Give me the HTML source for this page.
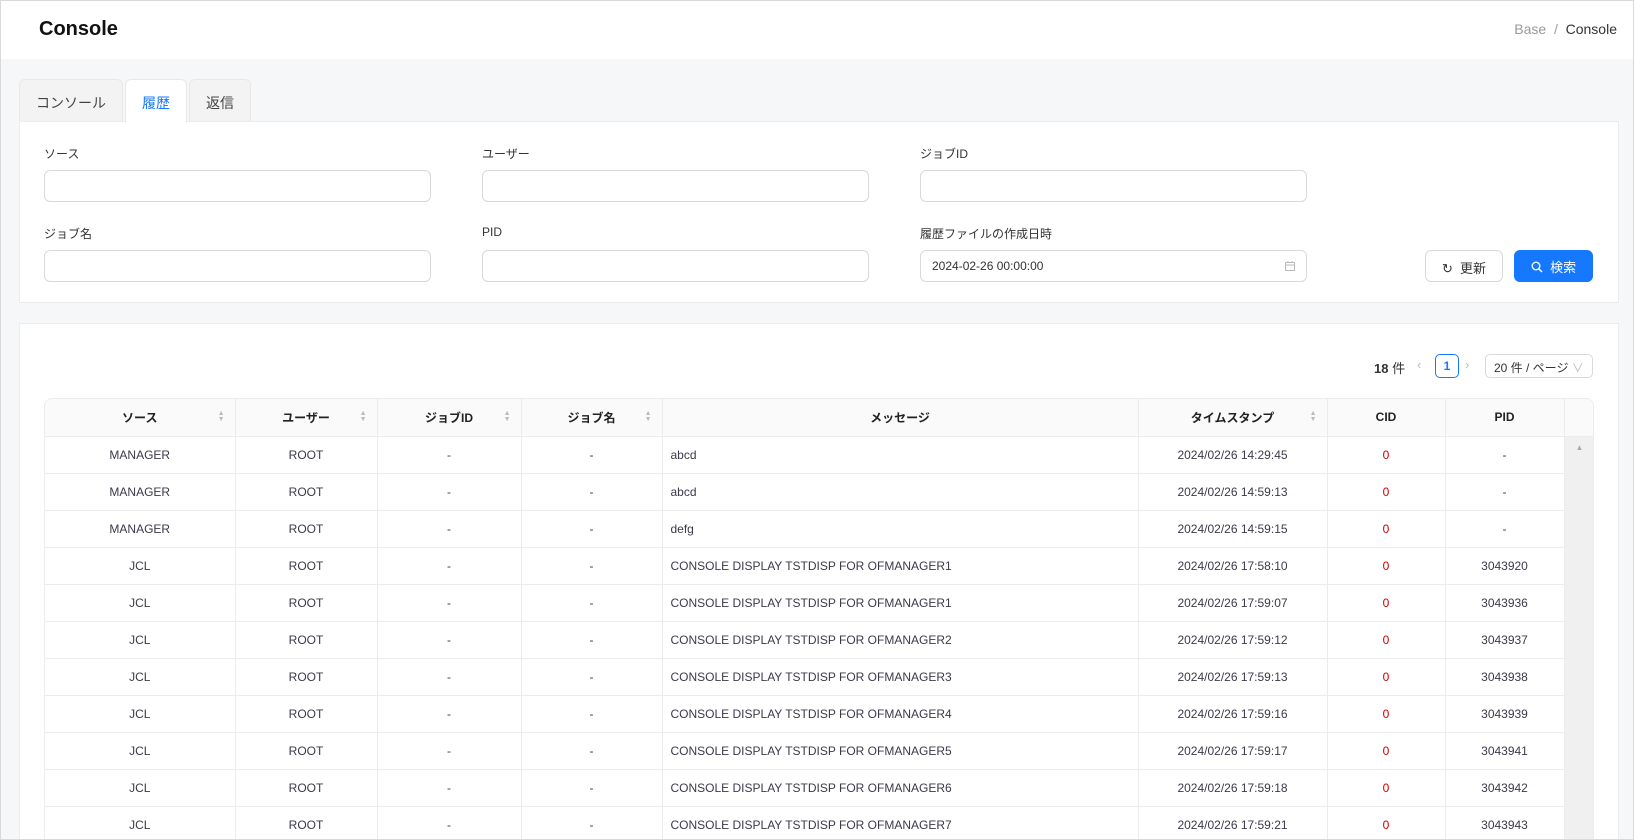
<!DOCTYPE html>
<html><head><meta charset="utf-8"><style>
*{box-sizing:border-box;margin:0;padding:0}
html,body{width:1634px;height:840px;overflow:hidden}
body{font-family:"Liberation Sans","Noto Sans CJK JP",sans-serif;color:#333;font-size:13px}
#w{position:relative;width:1634px;height:840px;overflow:hidden;background:#f6f7f9;border:1px solid #d9d9d9}
.abs{position:absolute}
.hdr{left:0;top:0;width:1632px;height:58px;background:#fff}
.hdr h1{position:absolute;left:38px;top:17px;font-size:20px;font-weight:bold;color:#111}
.bc{position:absolute;right:16px;top:20px;font-size:14px;color:#999}
.bc b{font-weight:normal;color:#333}
.tab{top:78px;height:43px;border:1px solid #e8e8e8;border-bottom:none;border-radius:6px 6px 0 0;background:#f3f3f3;font-size:14px;color:#444;padding:13px 0;text-align:center}
.panel{background:#fff;border:1px solid #ececec}
.lbl{font-size:12px;color:#333}
.inp{height:32px;border:1px solid #d9d9d9;border-radius:6px;background:#fff;font-size:12px;padding:8px 11px}
.btn{height:32px;border-radius:6px;font-size:13px;text-align:center;padding:7px 0}
table{border-collapse:collapse;table-layout:fixed;font-size:12px}
td,th{border-right:1px solid #ececec;border-bottom:1px solid #ececec;height:37px;text-align:center;white-space:nowrap;overflow:hidden}
td{color:#3a3a4a}
th{background:#fafafa;font-weight:bold;color:#222;position:relative}
th .s{position:absolute;right:10px;top:12px;font-size:7px;color:#bbb;line-height:6px}
td.m{text-align:left;padding-left:8px}
td.r{color:#c00}
</style></head><body><div id="w">
<div class="abs hdr"><h1>Console</h1><div class="bc">Base &nbsp;/&nbsp; <b>Console</b></div></div>
<div class="abs tab" style="left:18px;width:104px">コンソール</div>
<div class="abs tab" style="left:124px;width:62px;background:#fff;color:#1677ff;height:44px;z-index:2">履歴</div>
<div class="abs tab" style="left:188px;width:62px">返信</div>
<div class="abs panel" style="left:18px;top:120px;width:1600px;height:182px"></div>
<div class="abs lbl" style="left:43px;top:144px">ソース</div>
<div class="abs lbl" style="left:481px;top:144px">ユーザー</div>
<div class="abs lbl" style="left:919px;top:144px">ジョブID</div>
<div class="abs inp" style="left:43px;top:169px;width:387px"></div>
<div class="abs inp" style="left:481px;top:169px;width:387px"></div>
<div class="abs inp" style="left:919px;top:169px;width:387px"></div>
<div class="abs lbl" style="left:43px;top:224px">ジョブ名</div>
<div class="abs lbl" style="left:481px;top:224px">PID</div>
<div class="abs lbl" style="left:919px;top:224px">履歴ファイルの作成日時</div>
<div class="abs inp" style="left:43px;top:249px;width:387px"></div>
<div class="abs inp" style="left:481px;top:249px;width:387px"></div>
<div class="abs inp" style="left:919px;top:249px;width:387px">2024-02-26 00:00:00<svg style="position:absolute;right:10px;top:9px" width="12" height="12" viewBox="0 0 12 12" fill="none" stroke="#bbb"><rect x="1.5" y="2.5" width="9" height="8"/><path d="M1.5 5h9M4 1v2M8 1v2"/></svg></div>
<div class="abs btn" style="left:1424px;top:249px;width:78px;border:1px solid #d9d9d9;background:#fff">↻&nbsp; 更新</div>
<div class="abs btn" style="left:1513px;top:249px;width:79px;background:#1677ff;color:#fff">
<svg width="12" height="12" viewBox="0 0 12 12" fill="none" stroke="#fff" stroke-width="1.4" style="vertical-align:-1px"><circle cx="5" cy="5" r="3.8"/><path d="M8 8l3 3"/></svg>&nbsp; 検索</div>
<div class="abs panel" style="left:18px;top:322px;width:1600px;height:530px"></div>
<div class="abs" style="left:1373px;top:357px;font-size:13px"><b>18</b> 件</div>
<div class="abs" style="left:1416px;top:356px;color:#bbb">‹</div>
<div class="abs" style="left:1434px;top:353px;width:24px;height:24px;border:1px solid #1677ff;border-radius:5px;color:#1677ff;text-align:center;padding-top:4px;font-size:12px;font-weight:bold">1</div>
<div class="abs" style="left:1464px;top:356px;color:#bbb">›</div>
<div class="abs" style="left:1484px;top:353px;width:108px;height:24px;border:1px solid #d9d9d9;border-radius:5px;font-size:12px;padding:4px 8px">20 件 / ページ <span style="color:#bbb">∨</span></div>
<div class="abs" style="left:43px;top:397px;width:1550px;height:450px;border:1px solid #ececec;border-radius:8px 8px 0 0;overflow:hidden;background:#fff">
<table style="width:1550px">
<colgroup><col style="width:190px"><col style="width:142px"><col style="width:144px"><col style="width:141px"><col style="width:476px"><col style="width:189px"><col style="width:118px"><col style="width:119px"><col style="width:31px"></colgroup>
<tr><th>ソース<span class="s">▲<br>▼</span></th><th>ユーザー<span class="s">▲<br>▼</span></th><th>ジョブID<span class="s">▲<br>▼</span></th><th>ジョブ名<span class="s">▲<br>▼</span></th><th>メッセージ</th><th>タイムスタンプ<span class="s">▲<br>▼</span></th><th>CID</th><th>PID</th><th></th></tr>
<tr><td>MANAGER</td><td>ROOT</td><td>-</td><td>-</td><td class="m">abcd</td><td>2024/02/26 14:29:45</td><td class="r">0</td><td>-</td><td rowspan="11" style="background:#f0f0f0;vertical-align:top;color:#aaa;font-size:8px;padding-top:6px">▲</td></tr>
<tr><td>MANAGER</td><td>ROOT</td><td>-</td><td>-</td><td class="m">abcd</td><td>2024/02/26 14:59:13</td><td class="r">0</td><td>-</td></tr>
<tr><td>MANAGER</td><td>ROOT</td><td>-</td><td>-</td><td class="m">defg</td><td>2024/02/26 14:59:15</td><td class="r">0</td><td>-</td></tr>
<tr><td>JCL</td><td>ROOT</td><td>-</td><td>-</td><td class="m">CONSOLE DISPLAY TSTDISP FOR OFMANAGER1</td><td>2024/02/26 17:58:10</td><td class="r">0</td><td>3043920</td></tr>
<tr><td>JCL</td><td>ROOT</td><td>-</td><td>-</td><td class="m">CONSOLE DISPLAY TSTDISP FOR OFMANAGER1</td><td>2024/02/26 17:59:07</td><td class="r">0</td><td>3043936</td></tr>
<tr><td>JCL</td><td>ROOT</td><td>-</td><td>-</td><td class="m">CONSOLE DISPLAY TSTDISP FOR OFMANAGER2</td><td>2024/02/26 17:59:12</td><td class="r">0</td><td>3043937</td></tr>
<tr><td>JCL</td><td>ROOT</td><td>-</td><td>-</td><td class="m">CONSOLE DISPLAY TSTDISP FOR OFMANAGER3</td><td>2024/02/26 17:59:13</td><td class="r">0</td><td>3043938</td></tr>
<tr><td>JCL</td><td>ROOT</td><td>-</td><td>-</td><td class="m">CONSOLE DISPLAY TSTDISP FOR OFMANAGER4</td><td>2024/02/26 17:59:16</td><td class="r">0</td><td>3043939</td></tr>
<tr><td>JCL</td><td>ROOT</td><td>-</td><td>-</td><td class="m">CONSOLE DISPLAY TSTDISP FOR OFMANAGER5</td><td>2024/02/26 17:59:17</td><td class="r">0</td><td>3043941</td></tr>
<tr><td>JCL</td><td>ROOT</td><td>-</td><td>-</td><td class="m">CONSOLE DISPLAY TSTDISP FOR OFMANAGER6</td><td>2024/02/26 17:59:18</td><td class="r">0</td><td>3043942</td></tr>
<tr><td>JCL</td><td>ROOT</td><td>-</td><td>-</td><td class="m">CONSOLE DISPLAY TSTDISP FOR OFMANAGER7</td><td>2024/02/26 17:59:21</td><td class="r">0</td><td>3043943</td></tr>
</table></div>
</div></body></html>
